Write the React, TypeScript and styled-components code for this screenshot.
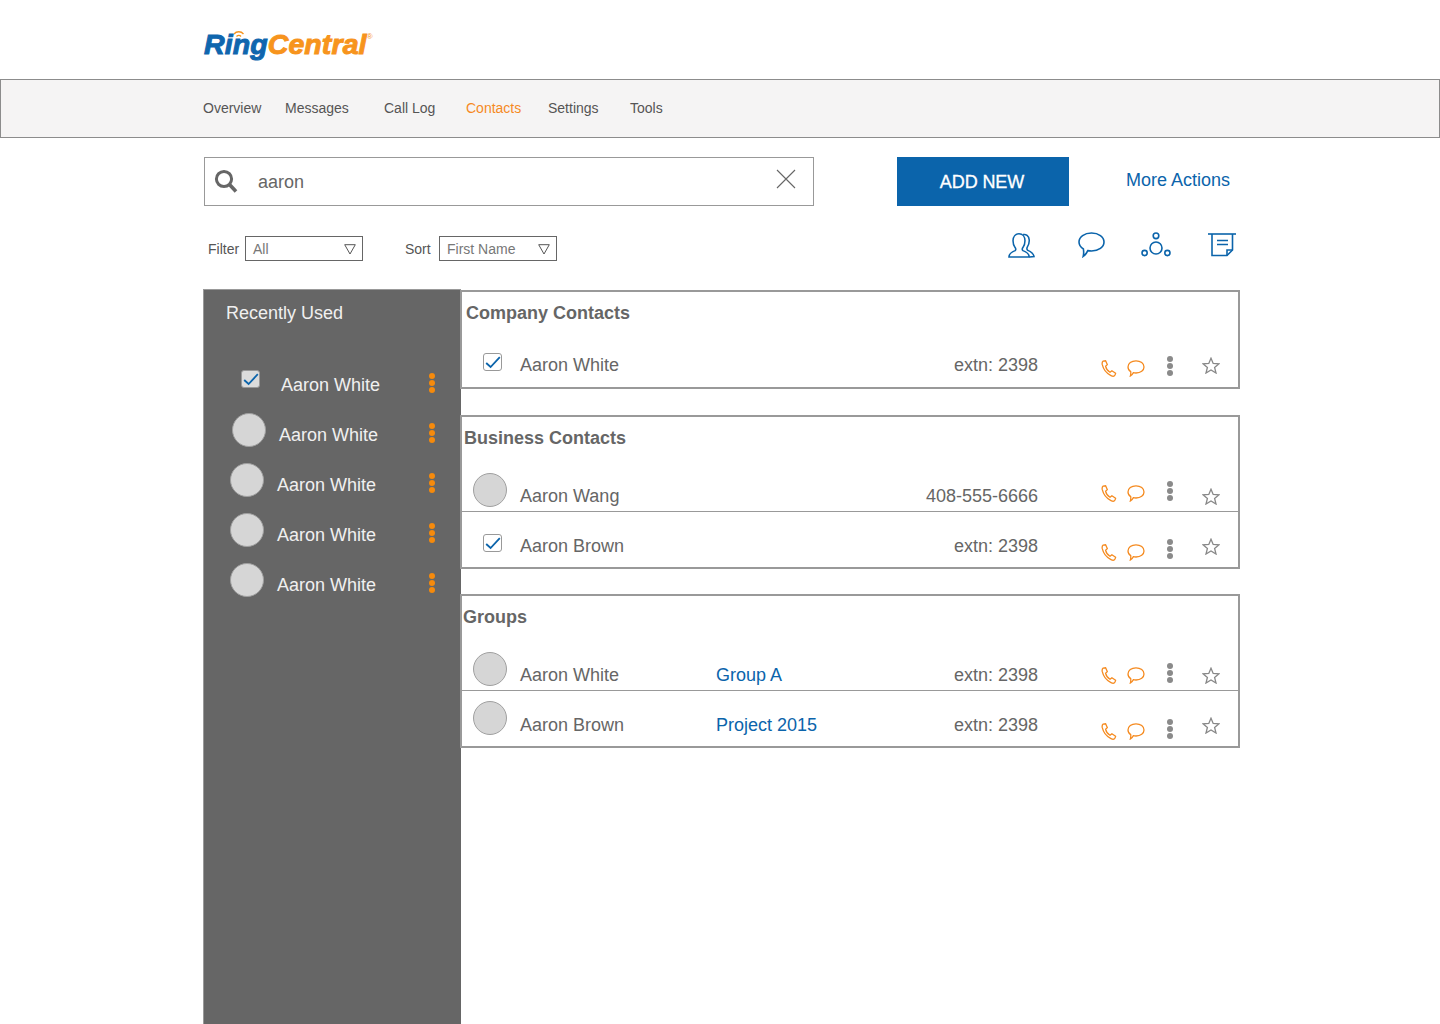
import styled, { createGlobalStyle } from "styled-components";

const BLUE = "#0b64ab";
const ORANGE = "#f58a1f";
const GREY = "#666666";
const LINE = "#999999";

const GlobalStyle = createGlobalStyle`
	html, body {
		margin: 0;
		padding: 0;
		background: #fff;
		height: 1024px;
		overflow: hidden;
	}
	body {
		font-family: "Liberation Sans", Arial, sans-serif;
		color: ${GREY};
	}
`;

const Page = styled.div`
	width: 1440px;
	height: 1024px;
	overflow: hidden;
`;

const Header = styled.header`
	height: 79px;
	box-sizing: border-box;
	padding: 26px 0 0 204px;
`;

const Logo = styled.div`
	display: inline-flex;
	position: relative;
	font-size: 28.5px;
	line-height: 36px;
	font-weight: 700;
	font-style: italic;
	letter-spacing: 0.1px;
	-webkit-text-stroke: 1px currentColor;
	color: #f7941d;
`;

const LogoBlue = styled.span`
	color: #0f66ae;
`;

const LogoMark = styled.sup`
	font-size: 8px;
	line-height: 8px;
	margin: 7px 0 0 0;
	font-style: normal;
	font-weight: 400;
	-webkit-text-stroke: 0;
`;

const LogoWaves = styled.svg`
	position: absolute;
	left: 29px;
	top: 4px;
`;

const Nav = styled.nav`
	height: 59px;
	box-sizing: border-box;
	border: 1px solid #8c8c8c;
	background: #f5f4f4;
	padding: 0 0 2px 202px;
	display: flex;
	align-items: center;
`;

const NavItem = styled.a<{ $width: number; $active?: boolean }>`
	width: ${(p) => p.$width}px;
	font-size: 14px;
	color: ${(p) => (p.$active ? ORANGE : "#555")};
`;

const Content = styled.div`
	padding: 19px 204px 0 204px;
`;

const Toolbar = styled.div`
	display: flex;
	align-items: flex-start;
`;

const Search = styled.div`
	width: 610px;
	height: 49px;
	box-sizing: border-box;
	border: 1px solid ${LINE};
	display: flex;
	align-items: center;
	padding: 0 17px 0 9px;
	font-size: 18px;
`;

const SearchText = styled.span`
	margin: 2px 0 0 20px;
	flex: 1;
`;

const ClearIcon = styled.svg`
	margin-bottom: 5px;
	stroke: ${GREY};
	stroke-width: 1.1;
`;

const AddButton = styled.button`
	margin-left: 83px;
	width: 172px;
	height: 49px;
	border: 0;
	background: ${BLUE};
	color: #fff;
	font: 400 18px "Liberation Sans", Arial, sans-serif;
	-webkit-text-stroke: 0.3px #fff;
	letter-spacing: -0.1px;
	padding: 1px 2px 0 0;
`;

const MoreActions = styled.a`
	margin: 12px 0 0 57px;
	font-size: 18px;
	line-height: 22px;
	color: ${BLUE};
`;

const FilterRow = styled.div`
	margin-top: 30px;
	height: 25px;
	display: flex;
	align-items: center;
	padding-left: 4px;
`;

const FieldLabel = styled.label<{ $gap: number; $width: number }>`
	font-size: 14px;
	margin-left: ${(p) => p.$gap}px;
	color: #555;
	width: ${(p) => p.$width}px;
`;

const SelectBox = styled.div`
	width: 118px;
	height: 25px;
	box-sizing: border-box;
	border: 1px solid ${GREY};
	display: flex;
	align-items: center;
	justify-content: space-between;
	padding: 0 6px 0 7px;
	font-size: 14px;
	color: #777;
`;

const TriangleIcon = styled.svg`
	margin-top: 1px;
	fill: none;
	stroke: #555;
	stroke-width: 1;
`;

const ToolIcons = styled.div`
	margin-left: auto;
	display: flex;
	align-items: center;
	margin-top: -7px;
`;

const ToolIcon = styled.svg<{ $gap: number }>`
	margin-left: ${(p) => p.$gap}px;
	fill: none;
	stroke: ${BLUE};
	stroke-width: 1.6;
	display: block;
`;

const Main = styled.main`
	margin: 28px 0 0 -1px;
	display: flex;
	align-items: flex-start;
	width: 1037px;
`;

const Sidebar = styled.aside`
	width: 258px;
	height: 735px;
	flex: none;
	box-sizing: border-box;
	background: ${GREY};
	border: 1px solid ${LINE};
	border-width: 1px 0 0 1px;
	padding: 12px 0 0 0;
	color: #f0f0f0;
`;

const SidebarTitle = styled.div`
	font-size: 18px;
	line-height: 22px;
	margin: 0 0 36px 22px;
`;

const SideItem = styled.div<{ $indent: number }>`
	height: 50px;
	display: flex;
	align-items: center;
	padding: 0 26px 0 ${(p) => p.$indent}px;
`;

const SideLead = styled.div`
	width: 47px;
	flex: none;
	display: flex;
	margin-bottom: 10px;
`;

const SideCheck = styled.div`
	margin-left: 7px;
	margin-bottom: 2px;
`;

const SideName = styled.span`
	font-size: 18px;
	line-height: 22px;
`;

const SideDots = styled.div`
	margin: 0 0 4px auto;
	display: flex;
	flex-direction: column;
	gap: 1px;
`;

const Dot = styled.i<{ $color: string }>`
	display: block;
	width: 6px;
	height: 6px;
	border-radius: 50%;
	background: ${(p) => p.$color};
`;

const Panels = styled.div`
	width: 780px;
	margin-left: -1px;
	flex: none;
	margin-top: 1px;
`;

const Panel = styled.section<{ $top: number }>`
	margin-top: ${(p) => p.$top}px;
	box-sizing: border-box;
	background: #fff;
	border: 2px solid ${LINE};
`;

const PanelTitle = styled.h3<{ $inset: number }>`
	margin: 0;
	padding: 10px 0 0 ${(p) => p.$inset}px;
	font-size: 18px;
	line-height: 22px;
	font-weight: 700;
	color: ${GREY};
`;

const Row = styled.div<{ $height: number; $pad: number; $line?: boolean }>`
	height: ${(p) => p.$height + (p.$line ? 1 : 0)}px;
	box-sizing: border-box;
	border-bottom: ${(p) => (p.$line ? `1px solid ${LINE}` : "0")};
	padding-bottom: ${(p) => p.$pad}px;
	display: grid;
	grid-template-columns: 58px 196px 322px auto;
	align-items: end;
	font-size: 18px;
	line-height: 22px;
`;

const Lead = styled.div<{ $left: number; $down: number }>`
	display: flex;
	padding-left: ${(p) => p.$left}px;
	margin-bottom: ${(p) => p.$down}px;
`;

const Avatar = styled.div`
	width: 34px;
	height: 34px;
	box-sizing: border-box;
	flex: none;
	border-radius: 50%;
	background: #d6d6d6;
	border: 1px solid #a0a0a0;
`;

const Check = styled.div<{ $side?: boolean }>`
	width: 19px;
	height: 18px;
	box-sizing: border-box;
	border-radius: 3px;
	border: 1px solid ${LINE};
	background: ${(p) => (p.$side ? "#dcdcdc" : "#fff")};
	display: flex;
	align-items: center;
	justify-content: center;
`;

const Details = styled.div`
	display: flex;
	justify-content: space-between;
`;

const GroupName = styled.a`
	color: ${BLUE};
`;

const Actions = styled.div`
	margin-left: 63px;
	display: flex;
	align-items: flex-end;
	height: 22px;
`;

const ActionIcon = styled.svg<{ $gap: number; $up: number; $stroke: string }>`
	display: block;
	flex: none;
	margin-left: ${(p) => p.$gap}px;
	margin-bottom: ${(p) => p.$up}px;
	fill: none;
	stroke: ${(p) => p.$stroke};
	stroke-width: 1.3;
`;

const RowDots = styled.div<{ $up: number }>`
	margin-left: 22px;
	margin-bottom: ${(p) => p.$up}px;
	display: flex;
	flex-direction: column;
	gap: 1px;
`;

const CheckMark = () => (
	<svg width="16" height="13" viewBox="0 0 16 13" fill="none" stroke={BLUE} strokeWidth="1.8">
		<path d="M1.2 7 L5.6 11 L14.8 1.2" />
	</svg>
);

type ContactRow = {
	name: string;
	group?: string;
	extn: string;
	lead: "check" | "avatar";
	height: number;
	pad: number;
	line?: boolean;
	leadDown: number;
	phoneUp: number;
	dotsUp: number;
	starUp: number;
};

type ContactPanel = { title: string; inset: number; top: number; rows: ContactRow[] };

const panels: ContactPanel[] = [
	{
		title: "Company Contacts",
		inset: 4,
		top: 0,
		rows: [
			{ name: "Aaron White", extn: "extn: 2398", lead: "check", height: 63, pad: 11, leadDown: 5, phoneUp: -1, dotsUp: 0, starUp: 2 },
		],
	},
	{
		title: "Business Contacts",
		inset: 2,
		top: 26,
		rows: [
			{ name: "Aaron Wang", extn: "408-555-6666", lead: "avatar", height: 62, pad: 4, line: true, leadDown: 0, phoneUp: 5, dotsUp: 6, starUp: 2 },
			{ name: "Aaron Brown", extn: "extn: 2398", lead: "check", height: 55, pad: 10, leadDown: 5, phoneUp: -4, dotsUp: -2, starUp: 2 },
		],
	},
	{
		title: "Groups",
		inset: 1,
		top: 25,
		rows: [
			{ name: "Aaron White", group: "Group A", extn: "extn: 2398", lead: "avatar", height: 62, pad: 4, line: true, leadDown: 0, phoneUp: 2, dotsUp: 3, starUp: 2 },
			{ name: "Aaron Brown", group: "Project 2015", extn: "extn: 2398", lead: "avatar", height: 55, pad: 10, leadDown: 1, phoneUp: -4, dotsUp: -3, starUp: 2 },
		],
	},
];

const recent = [
	{ indent: 30, check: true },
	{ indent: 28 },
	{ indent: 26 },
	{ indent: 26 },
	{ indent: 26 },
];

const Phone = ({ up }: { up: number }) => (
	<ActionIcon $gap={0} $up={up} $stroke={ORANGE} width="16" height="17" viewBox="0 0 16 17">
		<path d="M2 1.2 L4.6 0.8 L6.3 4.6 L4.6 6.2 C5 8.6 6.8 11 9 12.3 L10.9 10.8 L14.6 13.3 L14 15 C13.4 16.2 11.6 16.4 10 15.6 C5.6 13.4 2.2 8.8 1.2 4.4 C1 3 1.2 1.8 2 1.2 Z" />
	</ActionIcon>
);

const Bubble = ({ up }: { up: number }) => (
	<ActionIcon $gap={10} $up={up} $stroke={ORANGE} width="18" height="17" viewBox="0 0 18 17">
		<path d="M9 0.9 C13.6 0.9 17 3.4 17 7 C17 10.6 13.6 13 9 13 C8 13 7.2 12.9 6.3 12.7 C5.6 14.2 4.8 15.2 3.4 16 C3.8 14.6 3.9 13.2 3.7 11.6 C2 10.6 1 9 1 7 C1 3.4 4.4 0.9 9 0.9 Z" />
	</ActionIcon>
);

const Star = ({ up }: { up: number }) => (
	<ActionIcon $gap={29} $up={up} $stroke="#888" width="18" height="17" viewBox="0 0 18 17">
		<path d="M9 1.2 L11.2 6.4 L17 6.8 L12.6 10.4 L14 16 L9 13 L4 16 L5.4 10.4 L1 6.8 L6.8 6.4 Z" />
	</ActionIcon>
);

const Triangle = () => (
	<TriangleIcon width="12" height="11" viewBox="0 0 12 11">
		<path d="M0.7 0.7 H11.3 L6 10 Z" />
	</TriangleIcon>
);

export default function App() {
	return (
		<Page>
			<GlobalStyle />
			<Header>
				<Logo>
					<LogoBlue>Ring</LogoBlue>Central
					<LogoMark>®</LogoMark>
					<LogoWaves width="12" height="8" viewBox="0 0 12 8" fill="none" stroke="#f7941d" strokeWidth="1.3">
						<path d="M1 4 C3.5 1 8 1 10.5 4" />
						<path d="M3.5 6.5 C5 5 6.8 5 8 6.5" />
					</LogoWaves>
				</Logo>
			</Header>
			<Nav>
				<NavItem $width={82}>Overview</NavItem>
				<NavItem $width={99}>Messages</NavItem>
				<NavItem $width={82}>Call Log</NavItem>
				<NavItem $width={82} $active>Contacts</NavItem>
				<NavItem $width={82}>Settings</NavItem>
				<NavItem $width={60}>Tools</NavItem>
			</Nav>
			<Content>
				<Toolbar>
					<Search>
						<svg width="24" height="25" viewBox="0 0 24 25" fill="none" stroke={GREY}>
							<circle cx="10" cy="10" r="7.6" strokeWidth="3" />
							<path d="M15.5 15.5 L22 22.5" strokeWidth="3.6" />
						</svg>
						<SearchText>aaron</SearchText>
						<ClearIcon width="20" height="20" viewBox="0 0 20 20">
							<path d="M1 1 L19 19 M19 1 L1 19" />
						</ClearIcon>
					</Search>
					<AddButton>ADD NEW</AddButton>
					<MoreActions>More Actions</MoreActions>
				</Toolbar>
				<FilterRow>
					<FieldLabel $gap={0} $width={37}>Filter</FieldLabel>
					<SelectBox>
						All
						<Triangle />
					</SelectBox>
					<FieldLabel $gap={42} $width={34}>Sort</FieldLabel>
					<SelectBox>
						First Name
						<Triangle />
					</SelectBox>
					<ToolIcons>
						<ToolIcon $gap={0} width="27" height="27" viewBox="0 0 28 27">
							<path d="M1 25.5 H22 C22 22 20 20.5 15.5 18.8 C14.6 18 14.8 16.4 15.6 15.4 C17 13.4 17.6 11.4 17.6 8.6 C17.6 4.2 15 1.4 11.4 1.4 C7.8 1.4 5.2 4.2 5.2 8.6 C5.2 11.4 5.8 13.4 7.2 15.4 C8 16.4 8.2 18 7.4 18.8 C3.2 20.4 1 22 1 25.5 Z" />
							<path d="M15.6 2.2 C18.6 1.4 21.6 3.6 22 7.6 C22.2 10.6 21.4 13 20 15.2 C19.4 16.4 19.6 17.8 20.6 18.6 C23.8 20 26.4 21.6 27 25 L22.4 25.5" />
						</ToolIcon>
						<ToolIcon $gap={43} width="27" height="26" viewBox="0 0 27 26">
							<path d="M13.5 1 C20.6 1 26 4.8 26 10 C26 15.2 20.6 19 13.5 19 C12.2 19 11 18.8 9.8 18.6 C8.8 21 7.2 23 5.2 24.4 C5.8 22 5.8 19.6 5.4 17 C2.6 15.2 1 12.8 1 10 C1 4.8 6.4 1 13.5 1 Z" />
						</ToolIcon>
						<ToolIcon $gap={36} width="30" height="26" viewBox="0 0 30 26">
							<circle cx="15" cy="3.8" r="2.8" />
							<circle cx="15" cy="16" r="6" />
							<circle cx="3.6" cy="21" r="2.6" />
							<circle cx="26.4" cy="21" r="2.6" />
						</ToolIcon>
						<ToolIcon $gap={37} width="28" height="24" viewBox="0 0 28 24">
							<path d="M0 1 H28" />
							<path d="M4 1 V22.5 H19 L24.5 17 V1" />
							<path d="M19 22.5 V17 H24.5" />
							<path d="M9 7.5 H20 M9 11.5 H20" />
						</ToolIcon>
					</ToolIcons>
				</FilterRow>
				<Main>
					<Sidebar>
						<SidebarTitle>Recently Used</SidebarTitle>
						{recent.map((r, i) => (
							<SideItem key={i} $indent={r.indent}>
								<SideLead>
									{r.check ? (
										<SideCheck>
											<Check $side>
												<CheckMark />
											</Check>
										</SideCheck>
									) : (
										<Avatar />
									)}
								</SideLead>
								<SideName>Aaron White</SideName>
								<SideDots>
									<Dot $color="#f58a0c" />
									<Dot $color="#f58a0c" />
									<Dot $color="#f58a0c" />
								</SideDots>
							</SideItem>
						))}
					</Sidebar>
					<Panels>
						{panels.map((panel) => (
							<Panel key={panel.title} $top={panel.top}>
								<PanelTitle $inset={panel.inset}>{panel.title}</PanelTitle>
								{panel.rows.map((row) => (
									<Row key={row.name} $height={row.height} $pad={row.pad} $line={row.line}>
										<Lead $left={row.lead === "check" ? 21 : 11} $down={row.leadDown}>
											{row.lead === "check" ? (
												<Check>
													<CheckMark />
												</Check>
											) : (
												<Avatar />
											)}
										</Lead>
										<span>{row.name}</span>
										<Details>
											<GroupName>{row.group}</GroupName>
											<span>{row.extn}</span>
										</Details>
										<Actions>
											<Phone up={row.phoneUp} />
											<Bubble up={row.phoneUp} />
											<RowDots $up={row.dotsUp}>
												<Dot $color="#8a8a8a" />
												<Dot $color="#8a8a8a" />
												<Dot $color="#8a8a8a" />
											</RowDots>
											<Star up={row.starUp} />
										</Actions>
									</Row>
								))}
							</Panel>
						))}
					</Panels>
				</Main>
			</Content>
		</Page>
	);
}
